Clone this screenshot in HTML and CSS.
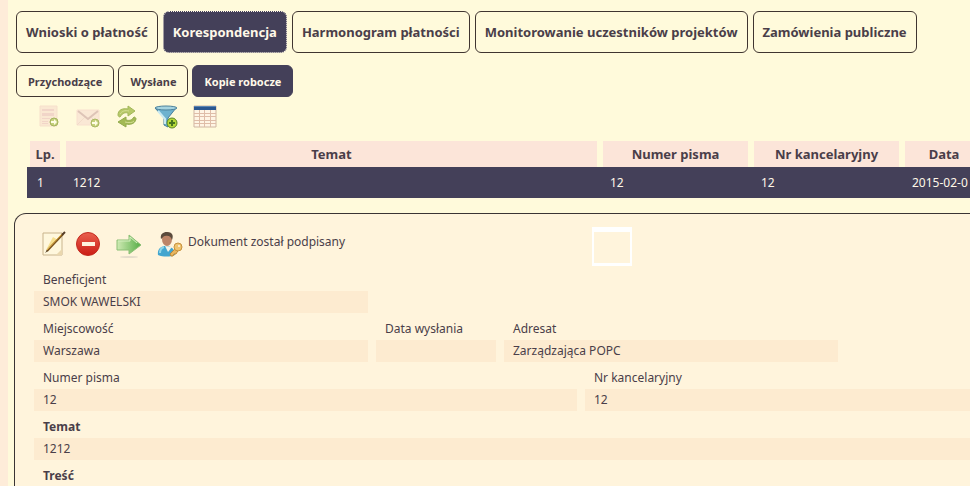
FILE: index.html
```html
<!DOCTYPE html>
<html lang="pl">
<head>
  <meta charset="UTF-8" />
  <meta name="viewport" content="width=device-width, initial-scale=1.0" />
  <title>Korespondencja - Kopie robocze</title>
  <link rel="stylesheet" href="styles.css">
</head>
<body>
  <main class="page">
    <nav class="tabs">
      <button type="button">Wnioski o płatność</button>
      <button type="button" class="active focused">Korespondencja</button>
      <button type="button">Harmonogram płatności</button>
      <button type="button">Monitorowanie uczestników projektów</button>
      <button type="button">Zamówienia publiczne</button>
    </nav>
    <nav class="subtabs">
      <button type="button">Przychodzące</button>
      <button type="button">Wysłane</button>
      <button type="button" class="active">Kopie robocze</button>
    </nav>

    <div class="toolbar">
      <button type="button" aria-label="Nowy dokument" disabled>
        <svg width="24" height="24" viewBox="0 0 24 24">
          <path d="M3 1h17v20H3z" fill="#fae8d2" stroke="#f6e0cb" />
          <path d="M5 4h12v2H5zM5 8h12v3H5zM5 13h8v1H5zM5 16h6v1H5zM5 18h6v1H5z" fill="#f1d5c8" />
          <circle cx="17" cy="17" r="4" fill="#c5d07c" stroke="#a3b35c" />
          <path d="M14 16h3v-2l3 3-3 3v-2h-3z" fill="#fffde4" />
        </svg>
      </button>
      <button type="button" aria-label="Nowa wiadomość" disabled>
        <svg width="24" height="24" viewBox="0 0 24 24">
          <path d="M1 5h22v15H1z" fill="#fae8d5" stroke="#f8e0cf" />
          <path d="M1 20l8-8M23 20l-8-8" stroke="#f2dcc9" fill="none" />
          <path d="M2 6l10 8L22 6" stroke="#dec4b7" stroke-width="2" fill="none" />
          <circle cx="19" cy="18" r="4" fill="#c5d07c" stroke="#aab863" />
          <path d="M16 17h3v-2l3 3-3 3v-2h-3z" fill="#fffde4" />
        </svg>
      </button>
      <button type="button" aria-label="Odśwież">
        <svg width="24" height="24" viewBox="0 0 24 24">
          <path d="M3 10C3 5 7 3 13 4V1l7 5-7 5V8C9 7 7 9 5 12 4 12 3 11 3 10z" fill="#b7c968" stroke="#a3b75a" />
          <path d="M21 14c-1 5-6 6-10 5v3l-8-5 8-5v3c4 1 6 0 8-3 1 0 2 1 2 2z" fill="#a3b954" stroke="#93aa4d" />
          <path d="M5 9c2-3 5-4 9-3M19 16c-2 2-5 2-9 1" stroke="#d4de94" fill="none" />
        </svg>
      </button>
      <button type="button" aria-label="Filtruj">
        <svg width="24" height="24" viewBox="0 0 24 24">
          <path d="M1 3l9 10v7l4 2V13l8-10z" fill="#6db2cf" stroke="#477f9c" />
          <path d="M4 6l7 8v5" stroke="#c9e9f1" stroke-width="2" fill="none" />
          <ellipse cx="12" cy="3" rx="11" ry="2" fill="#a5d3df" stroke="#4b819b" />
          <circle cx="18" cy="18" r="5" fill="#b4d838" stroke="#5d8626" />
          <path d="M18 15v6M15 18h6" stroke="#47751e" stroke-width="2" />
        </svg>
      </button>
      <button type="button" aria-label="Kolumny">
        <svg width="24" height="24" viewBox="0 0 24 24">
          <path d="M1 1h22v21H1z" fill="#fff5e4" stroke="#cfb5a2" />
          <path d="M1 1h22v4H1z" fill="#2b5790" />
          <path d="M1 1h22v1H1z" fill="#5b86b2" />
          <path d="M1 8.500h22M1 11.500h22M1 15.500h22M1 18.500h22M6.500 5v17M11.500 5v17M17.500 5v17" stroke="#dfbda8" />
        </svg>
      </button>
    </div>

    <table class="list">
      <thead>
        <tr>
          <th class="col-lp">Lp.</th>
          <th>Temat</th>
          <th class="col-number">Numer pisma</th>
          <th class="col-number">Nr kancelaryjny</th>
          <th class="col-date">Data</th>
        </tr>
      </thead>
      <tbody>
        <tr>
          <td>1</td>
          <td>1212</td>
          <td>12</td>
          <td>12</td>
          <td>2015-02-0</td>
        </tr>
      </tbody>
    </table>

    <section class="panel">
      <div class="actions">
        <div class="buttons">
          <button type="button" aria-label="Edytuj">
            <svg width="26" height="28" viewBox="0 0 26 28">
              <path d="M2 3h19v22H2z" fill="#fff7dd" stroke="#c9b48d" />
              <path d="M15 25l6-6v6z" fill="#ead7ae" />
              <path d="M5 20L12 7l5 3z" fill="#f7df8f" />
              <path d="M6 21L22 4" stroke="#7a531f" stroke-width="2" />
              <path d="M6 20L21 4" stroke="#e0ad43" />
              <path d="M21 5l3-3" stroke="#553c28" stroke-width="2" />
              <path d="M4 23l2-3 1 1z" fill="#4d3b24" />
            </svg>
          </button>
          <button type="button" aria-label="Usuń">
            <svg width="26" height="28" viewBox="0 0 26 28">
              <defs>
                <linearGradient id="red" x2="0" y2="1">
                  <stop stop-color="#e9604e" />
                  <stop offset="1" stop-color="#cb1d15" />
                </linearGradient>
              </defs>
              <circle cx="13" cy="14" r="11.500" fill="url(#red)" stroke="#c32b20" />
              <path d="M7 12h13v4H7z" fill="#fff3df" />
            </svg>
          </button>
        </div>
        <div class="buttons buttons-sign">
          <button type="button" aria-label="Wyślij">
            <svg width="26" height="28" viewBox="0 0 26 28">
              <defs>
                <linearGradient id="green" x2="1" y2="0">
                  <stop stop-color="#cfeab3" />
                  <stop offset="1" stop-color="#55ad46" />
                </linearGradient>
              </defs>
              <ellipse cx="13" cy="27" rx="9" ry="1" fill="#e5dccb" />
              <path d="M1 10h12V5l12 10-12 9v-4H1z" fill="url(#green)" stroke="#8cbf76" />
              <path d="M2 11h12V7l7 6" stroke="#d5efbf" fill="none" />
            </svg>
          </button>
          <button type="button" aria-label="Podpis">
            <svg width="26" height="28" viewBox="0 0 26 28">
              <path d="M1 25c-1-6 3-9 8-9s9 3 9 9c-5 2-12 2-17 0z" fill="#42a5cf" />
              <path d="M3 23c0-3 1-5 4-6" stroke="#8ed5e8" stroke-width="2" fill="none" />
              <path d="M8 16l3 6 4-5z" fill="#f4f3e7" />
              <ellipse cx="10" cy="9" rx="5" ry="7" fill="#bd8467" />
              <path d="M4 9c-1-5 2-7 6-7 5 0 7 3 5 8-1-4-4-5-7-4-2 0-2 2-4 3z" fill="#5b4b3c" />
              <path d="M20 17l-7 7 1 2h2l1-2h2l3-5z" fill="#e8b65f" stroke="#bd8939" />
              <circle cx="21" cy="17" r="4" fill="#efc36f" stroke="#c7923e" />
              <circle cx="22" cy="16" r="1" fill="#fff4dc" />
            </svg>
          </button>
        </div>
        <span class="signed">Dokument został podpisany</span>
        <span class="preview"></span>
      </div>

      <form class="details">
        <div class="row row-three">
          <div class="field">
            <label for="beneficjent">Beneficjent</label>
            <input type="text" id="beneficjent" value="SMOK WAWELSKI" readonly />
          </div>
        </div>
        <div class="row row-three">
          <div class="field">
            <label for="miejscowosc">Miejscowość</label>
            <input type="text" id="miejscowosc" value="Warszawa" readonly />
          </div>
          <div class="field">
            <label for="dataWyslania">Data wysłania</label>
            <input type="text" id="dataWyslania" value="" readonly />
          </div>
          <div class="field">
            <label for="adresat">Adresat</label>
            <input type="text" id="adresat" value="Zarządzająca POPC" readonly />
          </div>
        </div>
        <div class="row row-two">
          <div class="field">
            <label for="numerPisma">Numer pisma</label>
            <input type="text" id="numerPisma" value="12" readonly />
          </div>
          <div class="field">
            <label for="nrKancelaryjny">Nr kancelaryjny</label>
            <input type="text" id="nrKancelaryjny" value="12" readonly />
          </div>
        </div>
        <div class="row">
          <div class="field">
            <label for="temat" class="required">Temat</label>
            <input type="text" id="temat" value="1212" readonly />
          </div>
        </div>
        <div class="row">
          <div class="field">
            <label for="tresc" class="required">Treść</label>
            <input type="text" id="tresc" value="" readonly />
          </div>
        </div>
      </form>
    </section>
  </main>
</body>
</html>
```
FILE: styles.css
```css
* {
  box-sizing: border-box;
}
body {
  margin: 0;
  height: 100vh;
  border-left: 8px solid #feecd9;
  background: #fffadb;
  color: #4a3e49;
  font-family: Tahoma, "Noto Sans", sans-serif;
  font-size: 12px;
  overflow: hidden;
}
button, input {
  font: inherit;
  color: inherit;
}
.page {
  display: flex;
  flex-direction: column;
  height: 100%;
  padding-top: 11px;
  margin-right: -16px;
}
.tabs, .subtabs {
  display: flex;
  gap: 5px;
  padding-left: 8px;
}
.tabs button, .subtabs button {
  height: 42px;
  padding: 0 9px;
  border: 1px solid #403530;
  border-radius: 6px;
  background: transparent;
  font-size: 13px;
  font-weight: bold;
  white-space: nowrap;
}
.subtabs {
  gap: 4px;
  margin-top: 12px;
}
.subtabs button {
  height: 32px;
  padding: 0 11px;
  font-size: 11px;
}
.tabs .active, .subtabs .active {
  border-color: #444059;
  background: #444059;
  color: #fff8e8;
}
.tabs .focused {
  border: 1px dotted #fff8e8;
}
.toolbar {
  display: flex;
  gap: 15px;
  padding: 8px 0 0 29px;
}
.toolbar button, .buttons button {
  display: block;
  padding: 0;
  border: 0;
  background: none;
}
.toolbar svg, .buttons svg {
  display: block;
}

.list {
  width: calc(100% - 19px);
  margin: 12px 0 15px 19px;
  border-spacing: 0;
  table-layout: fixed;
}
.list th {
  height: 26px;
  padding: 0;
  border: solid #fffadb;
  border-width: 0 3px;
  background: #fce5d9;
  font-size: 13px;
}
.list td {
  height: 31px;
  padding: 0 10px;
  background: #444059;
  color: #fff8e8;
}
.col-lp {
  width: 36px;
}
.col-number {
  width: 151px;
}
.col-date {
  width: 84px;
}

.panel {
  flex: 1;
  min-height: 0;
  margin-left: 6px;
  padding: 13px 0 0 19px;
  border: 1px solid #3a3434;
  border-bottom: 0;
  border-radius: 12px 12px 0 0;
  background: #fff4dc;
  overflow: hidden;
}
.actions {
  display: flex;
  align-items: flex-start;
  height: 37px;
}
.buttons {
  display: flex;
  gap: 8px;
  padding: 3px 0 0 7px;
}
.buttons-sign {
  gap: 15px;
  padding-left: 15px;
}
.signed {
  width: 409px;
  padding-left: 5px;
  line-height: 30px;
}
.preview {
  width: 40px;
  height: 39px;
  border: 2px solid #fff;
  border-top-width: 5px;
  border-bottom-width: 3px;
}
.row {
  display: grid;
  gap: 8px;
}
.row-three {
  grid-template-columns: 334px 120px 334px;
}
.row-two {
  grid-template-columns: 543px 1fr;
}
.field label {
  display: block;
  height: 27px;
  padding: 5px 9px 0;
  line-height: 22px;
}
.field .required {
  font-weight: bold;
}
.field input {
  display: block;
  width: 100%;
  height: 22px;
  padding: 0 9px 2px;
  border: 0;
  background: #fdebd0;
}
```
